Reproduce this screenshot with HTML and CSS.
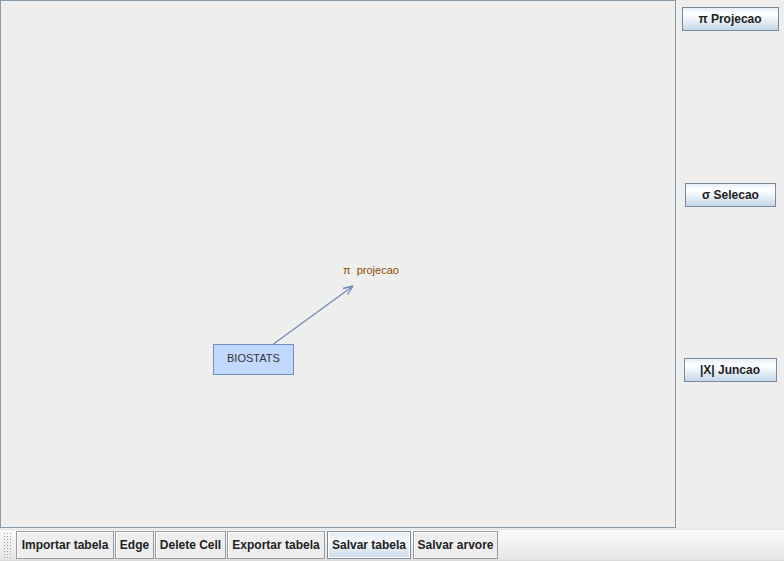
FILE: index.html
```html
<!DOCTYPE html>
<html>
<head>
<meta charset="utf-8">
<link rel="stylesheet" href="styles.css">
</head>
<body>
<div class="app">
  <div class="main">
    <div class="canvas">
      <svg class="edges" width="676" height="528" viewBox="0 0 676 528">
        <line x1="273.5" y1="344" x2="351" y2="287.5" stroke="#6e86b8" stroke-width="1.2"/>
        <path d="M353 286 L343 288.5 M353 286 L347.5 294.5" stroke="#6e86b8" stroke-width="1.3" fill="none"/>
      </svg>
      <div class="node-label">π&nbsp;&nbsp;projecao</div>
      <div class="node-table">BIOSTATS</div>
    </div>
    <div class="side">
      <button class="sbtn b1">π Projecao</button>
      <button class="sbtn b2">σ Selecao</button>
      <button class="sbtn b3">|X| Juncao</button>
    </div>
  </div>
  <div class="toolbar">
    <div class="grip"></div>
    <button class="tbtn w-imp">Importar tabela</button>
    <button class="tbtn w-edge">Edge</button>
    <button class="tbtn w-del">Delete Cell</button>
    <button class="tbtn w-exp">Exportar tabela</button>
    <button class="tbtn focus w-st">Salvar tabela</button>
    <button class="tbtn w-sa">Salvar arvore</button>
  </div>
</div>
</body>
</html>
```

FILE: styles.css
```css
html, body {
  margin: 0;
  padding: 0;
  background: #eeeeee;
  font-family: "Liberation Sans", Arial, sans-serif;
}
.app {
  width: 784px;
  height: 561px;
  display: flex;
  flex-direction: column;
}
.main {
  display: flex;
  height: 529px;
}
.canvas {
  position: relative;
  width: 674px;
  height: 526px;
  border: 1px solid #8a99a6;
  background: #eeeeee;
}
.edges {
  position: absolute;
  left: -1px;
  top: -1px;
}
.node-label {
  position: absolute;
  left: 342px;
  top: 263px;
  font-size: 11px;
  color: #8f4c00;
  white-space: nowrap;
}
.node-table {
  position: absolute;
  left: 212px;
  top: 343px;
  width: 79px;
  height: 29px;
  border: 1px solid #6e8ec4;
  background: #c3d8fe;
  font-size: 11px;
  color: #333333;
  text-indent: 13px;
  line-height: 26px;
}
.side {
  flex: 1;
  display: flex;
  flex-direction: column;
  align-items: center;
  padding-top: 7px;
}
.sbtn {
  font-family: "Liberation Sans", Arial, sans-serif;
  font-weight: bold;
  font-size: 12px;
  color: #222;
  height: 24px;
  border: 1px solid #7a8a99;
  background: linear-gradient(#e6eef6 0%, #ffffff 25%, #f3f7fb 45%, #c4d6e8 100%);
  padding: 0;
  margin: 0;
}
.b1 { width: 97px; }
.b2 { width: 91px; margin-top: 152px; margin-left: 1px; }
.b3 { width: 93px; margin-top: 151px; }
.toolbar {
  flex: 1;
  display: flex;
  align-items: center;
  background: linear-gradient(#fbfbfb 0%, #f2f2f2 40%, #e6e6e6 92%, #d8d8d8 100%);
  border-top: 1px solid #e4e4e4;
  padding-left: 3px;
  padding-bottom: 1px;
}
.grip {
  width: 9px;
  height: 26px;
  margin-right: 4px;
  background-image: radial-gradient(circle, #9aa0a6 0.7px, transparent 0.8px);
  background-size: 3px 3px;
}
.tbtn {
  font-family: "Liberation Sans", Arial, sans-serif;
  font-weight: bold;
  font-size: 12px;
  color: #222;
  height: 28px;
  border: 1px solid #9a9a9a;
  box-shadow: inset 1px 1px 0 #ffffff;
  background: #eeeeee;
  padding: 0;
  margin: 0;
  flex: none;
}
.w-imp { width: 98px; }
.w-edge { width: 39px; margin-left: 1px; }
.w-del { width: 71px; margin-left: 1px; }
.w-exp { width: 98px; margin-left: 1px; }
.w-st { width: 84px; margin-left: 2px; }
.w-sa { width: 85px; margin-left: 2px; }
.tbtn.focus {
  border-color: #7a8a99;
  background: linear-gradient(#dfe8f2 0%, #f5f8fb 30%, #e6eef6 60%, #c9d9ea 100%);
  box-shadow: inset 0 0 0 1px #ffffff;
}
```
